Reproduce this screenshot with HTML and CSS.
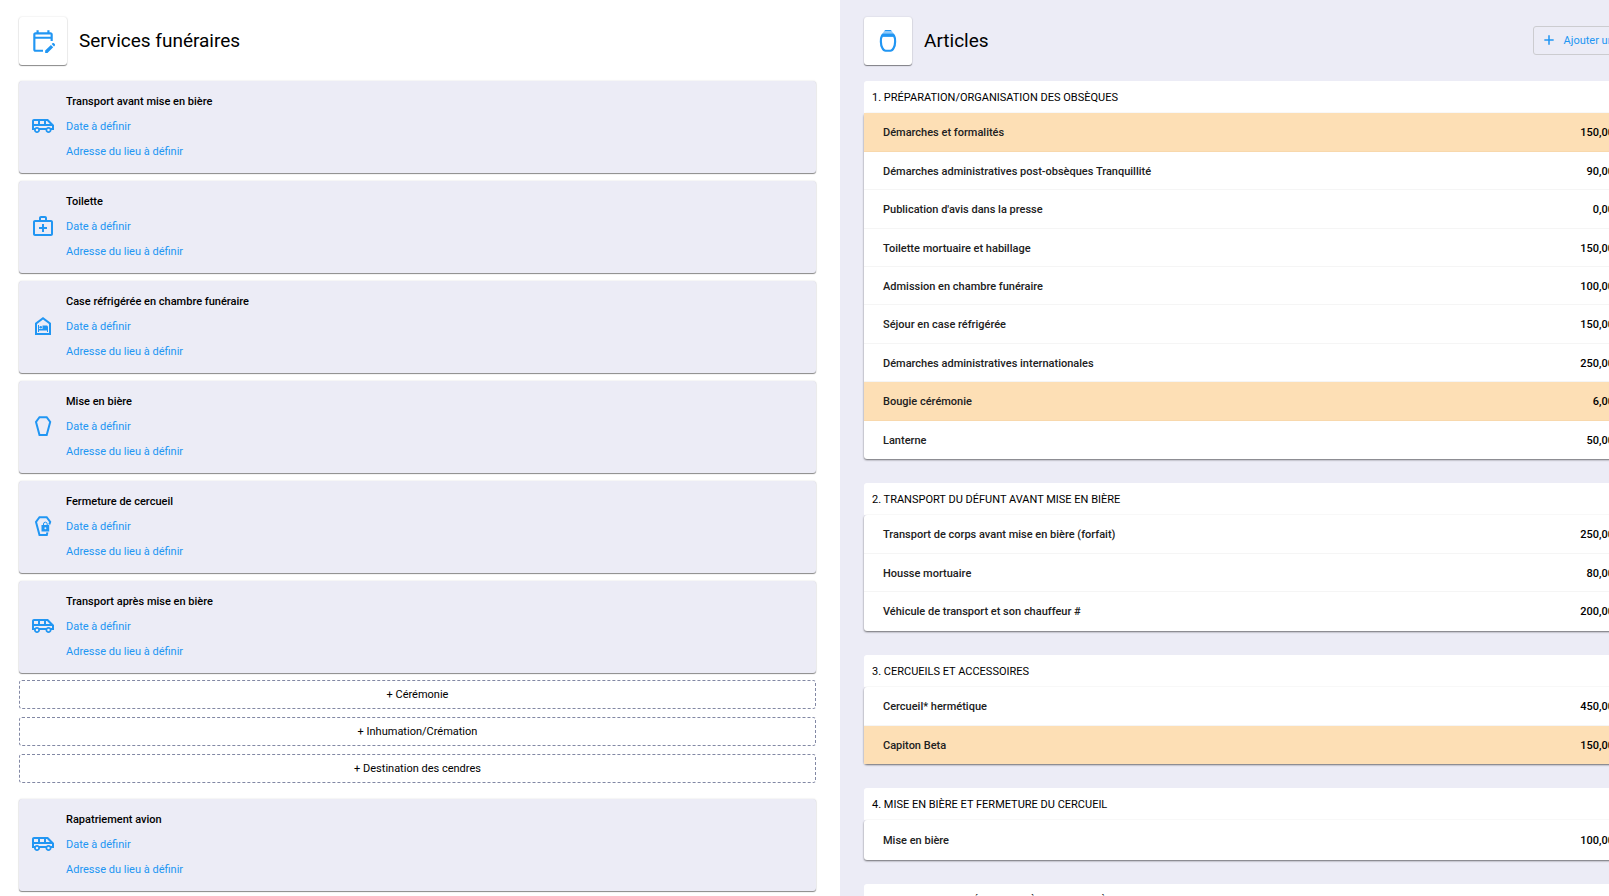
FILE: index.html
```html
<!DOCTYPE html>
<html lang="fr">
<head>
<meta charset="utf-8">
<title>Services funéraires</title>
<link rel="stylesheet" href="styles.css">
</head>
<body>
<svg class="sprite" aria-hidden="true">
  <symbol id="i-calendar" viewBox="0 0 24 24"><path d="M12 22H5c-1.11 0-2-.9-2-2l.01-14c0-1.1.88-2 1.99-2h1V2h2v2h8V2h2v2h1c1.1 0 2 .9 2 2v6h-2v-2H5v10h7v2zM5 6v2h14V6zM22.13 16.99l.71-.71c.39-.39.39-1.02 0-1.41l-.71-.71c-.39-.39-1.02-.39-1.41 0l-.71.71 2.12 2.12zm-.71.71-5.3 5.3H14v-2.12l5.3-5.3 2.12 2.12z"/></symbol>
  <symbol id="i-van" viewBox="0 0 24 24"><path fill-rule="evenodd" d="M17 5H3c-1.1 0-2 .89-2 2v9h2c0 1.65 1.34 3 3 3s3-1.35 3-3h5.5c0 1.65 1.34 3 3 3s3-1.35 3-3H23v-5l-6-6zM15 7h1l3 3h-4V7zM9 7h4v3H9V7zM3 7h4v3H3V7zM6 17.25a1.25 1.25 0 1 1 0-2.5 1.25 1.25 0 0 1 0 2.5zM17.5 17.25a1.25 1.25 0 1 1 0-2.5 1.25 1.25 0 0 1 0 2.5zM21 14h-1.23c-.55-.61-1.35-1-2.27-1s-1.72.39-2.27 1H8.22c-.55-.61-1.34-1-2.22-1s-1.67.39-2.22 1H3v-2h18v2z"/></symbol>
  <symbol id="i-medical" viewBox="0 0 24 24"><path d="M20 6h-4V4c0-1.1-.9-2-2-2h-4c-1.1 0-2 .9-2 2v2H4c-1.1 0-2 .9-2 2v12c0 1.1.9 2 2 2h16c1.1 0 2-.9 2-2V8c0-1.1-.9-2-2-2zM10 4h4v2h-4V4zm10 16H4V8h16v12z"/><path d="M13 10h-2v3H8v2h3v3h2v-3h3v-2h-3z"/></symbol>
  <symbol id="i-shelter" viewBox="0 0 24 24"><path d="M12 5.500l6 4.500v9H6v-9l6-4.500M12 3L4 9v12h16V9l-8-6z"/><path d="M15.500 11.500h-4V15H8v-4H7v7h1v-1.500h8V18h1v-5c0-.8-.7-1.500-1.500-1.500z"/><circle cx="9.750" cy="13.250" r="1.250"/></symbol>
  <symbol id="i-coffin" viewBox="0 0 24 24"><path class="line" d="M8.500 3.200h7.200L19.200 8l-3.500 13H8.500L5 8z"/></symbol>
  <symbol id="i-coffin-lock" viewBox="0 0 24 24"><path class="line" d="M18.300 10.500 19.200 8l-3.500-4.800H8.500L5 8l3.500 13h7.300l.6-2.600"/><path d="M10.500 11h7.700v6.500h-7.700z"/><path class="thin" d="M12.500 11.200V10a1.800 1.800 0 0 1 3.700 0v1.200"/><circle class="hole" cx="14.350" cy="14.200" r="1"/></symbol>
  <symbol id="i-urn" viewBox="0 0 24 24"><path class="line" d="M6.500 7C5 9.500 5 15.500 6.800 18.500Q8 21 9.800 21h4.400Q16 21 17.200 18.500C19 15.500 19 9.500 17.500 7z"/><path d="M5.300 7.800 6.800 5h10.400l1.500 2.800z"/><path d="M6.800 5.200 8.500 2.800h7l1.700 2.400z" opacity=".5"/><path d="M8.500 2.800 9.500 1.800h5l1 1z"/></symbol>
  <symbol id="i-plus" viewBox="0 0 24 24"><path d="M20 13.300h-6.700V20h-2.600v-6.700H4v-2.600h6.700V4h2.600v6.700H20z"/></symbol>
</svg>

<div class="page">
  <main class="pane">
    <header class="pane-head">
      <span class="badge"><svg class="icon-lg"><use href="#i-calendar"/></svg></span>
      <h1 class="title">Services funéraires</h1>
    </header>
    <div class="cards">
      <article class="card"><svg class="icon"><use href="#i-van"/></svg><div class="lines"><h2 class="name">Transport avant mise en bière</h2><a class="link" href="#">Date à définir</a><a class="link" href="#">Adresse du lieu à définir</a></div></article>
      <article class="card"><svg class="icon"><use href="#i-medical"/></svg><div class="lines"><h2 class="name">Toilette</h2><a class="link" href="#">Date à définir</a><a class="link" href="#">Adresse du lieu à définir</a></div></article>
      <article class="card"><svg class="icon"><use href="#i-shelter"/></svg><div class="lines"><h2 class="name">Case réfrigérée en chambre funéraire</h2><a class="link" href="#">Date à définir</a><a class="link" href="#">Adresse du lieu à définir</a></div></article>
      <article class="card"><svg class="icon"><use href="#i-coffin"/></svg><div class="lines"><h2 class="name">Mise en bière</h2><a class="link" href="#">Date à définir</a><a class="link" href="#">Adresse du lieu à définir</a></div></article>
      <article class="card"><svg class="icon"><use href="#i-coffin-lock"/></svg><div class="lines"><h2 class="name">Fermeture de cercueil</h2><a class="link" href="#">Date à définir</a><a class="link" href="#">Adresse du lieu à définir</a></div></article>
      <article class="card"><svg class="icon"><use href="#i-van"/></svg><div class="lines"><h2 class="name">Transport après mise en bière</h2><a class="link" href="#">Date à définir</a><a class="link" href="#">Adresse du lieu à définir</a></div></article>
    </div>
    <div class="adders">
      <button class="adder" type="button">+ Cérémonie</button>
      <button class="adder" type="button">+ Inhumation/Crémation</button>
      <button class="adder" type="button">+ Destination des cendres</button>
    </div>
    <div class="cards">
      <article class="card"><svg class="icon"><use href="#i-van"/></svg><div class="lines"><h2 class="name">Rapatriement avion</h2><a class="link" href="#">Date à définir</a><a class="link" href="#">Adresse du lieu à définir</a></div></article>
    </div>
  </main>

  <aside class="pane pane-articles">
    <header class="pane-head">
      <span class="badge"><svg class="icon-lg"><use href="#i-urn"/></svg></span>
      <h1 class="title">Articles</h1>
      <button class="add" type="button"><svg class="icon-sm"><use href="#i-plus"/></svg>Ajouter un article</button>
    </header>
    <div class="groups">
      <section class="group">
        <h2 class="group-title">1. Préparation/organisation des obsèques</h2>
        <table class="items">
          <tr class="marked"><td>Démarches et formalités</td><td class="price">150,00 €</td></tr>
          <tr><td>Démarches administratives post-obsèques Tranquillité</td><td class="price">90,00 €</td></tr>
          <tr><td>Publication d'avis dans la presse</td><td class="price">0,00 €</td></tr>
          <tr><td>Toilette mortuaire et habillage</td><td class="price">150,00 €</td></tr>
          <tr><td>Admission en chambre funéraire</td><td class="price">100,00 €</td></tr>
          <tr><td>Séjour en case réfrigérée</td><td class="price">150,00 €</td></tr>
          <tr><td>Démarches administratives internationales</td><td class="price">250,00 €</td></tr>
          <tr class="marked"><td>Bougie cérémonie</td><td class="price">6,00 €</td></tr>
          <tr><td>Lanterne</td><td class="price">50,00 €</td></tr>
        </table>
      </section>
      <section class="group">
        <h2 class="group-title">2. Transport du défunt avant mise en bière</h2>
        <table class="items">
          <tr><td>Transport de corps avant mise en bière (forfait)</td><td class="price">250,00 €</td></tr>
          <tr><td>Housse mortuaire</td><td class="price">80,00 €</td></tr>
          <tr><td>Véhicule de transport et son chauffeur #</td><td class="price">200,00 €</td></tr>
        </table>
      </section>
      <section class="group">
        <h2 class="group-title">3. Cercueils et accessoires</h2>
        <table class="items">
          <tr><td>Cercueil* hermétique</td><td class="price">450,00 €</td></tr>
          <tr class="marked"><td>Capiton Beta</td><td class="price">150,00 €</td></tr>
        </table>
      </section>
      <section class="group">
        <h2 class="group-title">4. Mise en bière et fermeture du cercueil</h2>
        <table class="items">
          <tr><td>Mise en bière</td><td class="price">100,00 €</td></tr>
        </table>
      </section>
      <section class="group">
        <h2 class="group-title">5. Transport du défunt après mise en bière</h2>
      </section>
    </div>
  </aside>
</div>
</body>
</html>
```

FILE: styles.css
```css
* { box-sizing: border-box; }

body {
  margin: 0;
  height: 100vh;
  overflow: hidden;
  background: #fff;
  color: #000;
  font: 11px/25px Roboto, "Liberation Sans", sans-serif;
}

h1, h2 { margin: 0; font: inherit; }

button { font: inherit; cursor: pointer; }

.sprite { position: absolute; width: 0; height: 0; }

/* The workspace is a little wider than the window and is cut at its right edge. */
.page {
  display: grid;
  grid-template-columns: 1fr 1fr;
  width: calc(100% + 71px);
  min-height: 100vh;
}

.pane {
  min-width: 0;
  padding: 17px 24px 17px 19px;
}

.pane-articles {
  padding: 17px 19px 17px 24px;
  background: #ececf6;
}

.pane-head {
  display: flex;
  align-items: center;
  margin-bottom: 16px;
}

.badge {
  display: flex;
  align-items: center;
  justify-content: center;
  width: 48px;
  height: 48px;
  border-radius: 3px;
  background: #fff;
}

.badge, .card {
  box-shadow: 0 1px 1px rgba(0, 0, 0, .45), 0 0 2px rgba(0, 0, 0, .14);
}

.title {
  margin-left: 12px;
  font-size: 19px;
  line-height: 24px;
}

.icon, .icon-lg, .icon-sm { flex: none; fill: #2196f3; }
.icon { width: 24px; height: 24px; margin-bottom: 2px; }
.icon-lg { width: 26px; height: 26px; }
.icon-sm { width: 14px; height: 14px; }

.line { fill: none; stroke: #2196f3; stroke-width: 2; }
.thin { fill: none; stroke: #2196f3; stroke-width: 1; }
.hole { fill: #ececf6; }

.add {
  display: flex;
  align-items: center;
  gap: 8px;
  height: 29px;
  margin: 0 0 2px auto;
  padding: 0 13px 0 8px;
  border: 1px solid #ccccd0;
  border-radius: 3px;
  background: transparent;
  color: #2196f3;
}

.cards, .adders {
  display: flex;
  flex-direction: column;
  gap: 8px;
}

.adders { margin: 7px 0 16px; }

.card {
  display: flex;
  align-items: center;
  gap: 11px;
  padding: 8px 12px 9px;
  border-radius: 3px;
  background: #ececf6;
}

.lines { display: flex; flex-direction: column; align-items: flex-start; }

.name { font-weight: 500; }

.link { color: #2196f3; text-decoration: none; }

.adder {
  height: 29px;
  padding: 0;
  border: 1px dashed #8288a4;
  border-radius: 3px;
  background: #fff;
  color: #000;
}

.groups { display: flex; flex-direction: column; gap: 24px; }

.group-title {
  padding: 4px 8px 3px;
  border-radius: 3px 3px 0 0;
  background: #fff;
  text-transform: uppercase;
}

.items {
  width: 100%;
  border-collapse: separate;
  border-spacing: 0;
  border-radius: 3px;
  background: #fff;
  color: #212121;
  font-weight: 500;
  line-height: 20px;
  box-shadow: 0 1px 2px rgba(0, 0, 0, .55);
}

.items tr { height: 38px; }
.items tr:nth-child(5n + 1), .items tr:nth-child(5n + 3) { height: 39px; }
.items tr:only-child { height: 40px; }

.items td {
  padding: 2px 19px 0;
  border-bottom: 1px solid #f5f5f5;
}

.items tr:last-child td { border-color: transparent; }
.items .marked td { border-color: #f8d8ac; background: #fddfb5; }

.items .price {
  padding-right: 38px;
  color: #000;
  text-align: right;
}
```
